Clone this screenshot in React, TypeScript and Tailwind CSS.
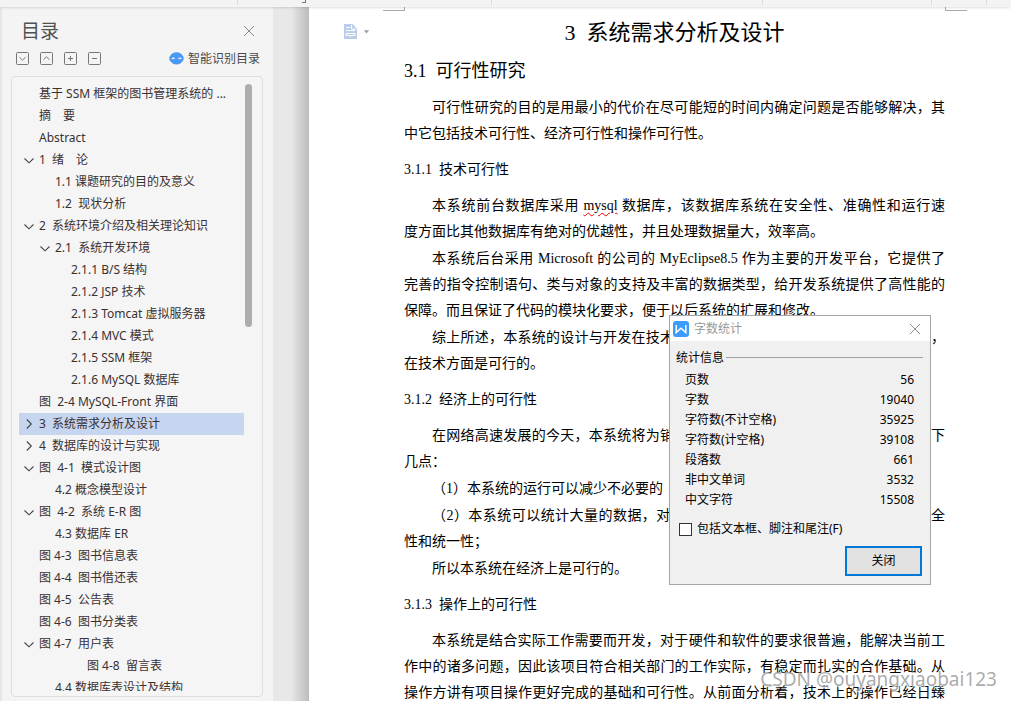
import { Fragment, type ReactNode } from 'react';

type Entry = { text: string; level: number; mark?: 'open' | 'closed'; current?: boolean };

const entries: Entry[] = [
  { text: '基于 SSM 框架的图书管理系统的 ...', level: 0 },
  { text: '摘　要', level: 0 },
  { text: 'Abstract', level: 0 },
  { text: '1  绪　论', level: 0, mark: 'open' },
  { text: '1.1 课题研究的目的及意义', level: 1 },
  { text: '1.2  现状分析', level: 1 },
  { text: '2  系统环境介绍及相关理论知识', level: 0, mark: 'open' },
  { text: '2.1  系统开发环境', level: 1, mark: 'open' },
  { text: '2.1.1 B/S 结构', level: 2 },
  { text: '2.1.2 JSP 技术', level: 2 },
  { text: '2.1.3 Tomcat 虚拟服务器', level: 2 },
  { text: '2.1.4 MVC 模式', level: 2 },
  { text: '2.1.5 SSM 框架', level: 2 },
  { text: '2.1.6 MySQL 数据库', level: 2 },
  { text: '图  2-4 MySQL-Front 界面', level: 0 },
  { text: '3  系统需求分析及设计', level: 0, mark: 'closed', current: true },
  { text: '4  数据库的设计与实现', level: 0, mark: 'closed' },
  { text: '图  4-1  模式设计图', level: 0, mark: 'open' },
  { text: '4.2 概念模型设计', level: 1 },
  { text: '图  4-2  系统 E-R 图', level: 0, mark: 'open' },
  { text: '4.3 数据库 ER', level: 1 },
  { text: '图 4-3  图书信息表', level: 0 },
  { text: '图 4-4  图书借还表', level: 0 },
  { text: '图 4-5  公告表', level: 0 },
  { text: '图 4-6  图书分类表', level: 0 },
  { text: '图 4-7  用户表', level: 0, mark: 'open' },
  { text: '图 4-8  留言表', level: 3 },
  { text: '4.4 数据库表设计及结构', level: 1 },
];

const indents = ['pl-1', 'pl-5', 'pl-9', 'pl-13'];

const stats: [string, string][] = [
  ['页数', '56'],
  ['字数', '19040'],
  ['字符数(不计空格)', '35925'],
  ['字符数(计空格)', '39108'],
  ['段落数', '661'],
  ['非中文单词', '3532'],
  ['中文字符', '15508'],
];

function Mark({ mark }: { mark?: 'open' | 'closed' }) {
  return (
    <svg className="w-3 h-3 shrink-0 mr-1" viewBox="0 0 12 12" fill="none" stroke="#444" strokeWidth="1.1">
      {mark === 'open' && <path d="M1.5 4.5 6 8.8l4.5-4.3" />}
      {mark === 'closed' && <path d="M3.8 1.5 8.3 6l-4.5 4.5" />}
    </svg>
  );
}

function BoxButton({ label, d }: { label: string; d: string }) {
  return (
    <button type="button" aria-label={label} className="w-[13px] h-[13px]">
      <svg viewBox="0 0 13 13" className="w-[13px] h-[13px]" fill="none" stroke="#777">
        <rect x=".5" y=".5" width="12" height="12" rx="1" />
        <path d={d} />
      </svg>
    </button>
  );
}

function Sidebar() {
  return (
    <aside className="w-[273px] shrink-0 flex flex-col border-l-2 border-[#e6e6e6] bg-[#f4f4f4] pl-[9px] pr-[10px] pb-1 text-xs">
      <div className="flex items-center justify-between pl-2.5 pr-2 pt-2.5">
        <h2 className="text-[19px] leading-7 text-[#505050]">目录</h2>
        <button type="button" aria-label="关闭目录" className="w-3 h-3">
          <svg viewBox="0 0 12 12" className="w-3 h-3" stroke="#8a8a8a" strokeWidth="1">
            <path d="M1 1l10 10M11 1 1 11" />
          </svg>
        </button>
      </div>
      <div className="flex items-center justify-between pl-[5px] pr-[3px] h-[26px]">
        <div className="flex gap-[11px]">
          <BoxButton label="展开" d="M3.5 5.3l3 2.9 3-2.9" />
          <BoxButton label="收起" d="M3.5 7.7l3-2.9 3 2.9" />
          <BoxButton label="增加级别" d="M6.5 4v5M4 6.5h5" />
          <BoxButton label="减少级别" d="M4 6.5h5" />
        </div>
        <button type="button" className="flex items-center gap-1 pt-px text-[#4a4a4a]">
          <svg viewBox="0 0 15 13" className="w-[15px] h-[13px]">
            <path
              d="M7.5.3c3 0 5.2 1.300 6 3.200.7.600 1.200 1.600 1.200 2.900 0 1.500-.6 2.600-1.500 3.200-1.100 1.800-3.100 3-5.700 3s-4.600-1.200-5.700-3C.9 9 .3 7.900.3 6.400c0-1.300.5-2.300 1.200-2.900.8-1.900 3-3.200 6-3.200z"
              fill="#4a9af5"
            />
            <path d="M2.900 7c.5-1.400 2-1.400 2.500 0M9.600 7c.6-1.400 2-1.400 2.500 0" fill="none" stroke="#fff" strokeWidth="1.100" />
          </svg>
          智能识别目录
        </button>
      </div>
      <div className="mt-[5px] flex-1 min-h-0 flex rounded border border-[#dedede] bg-[#f5f5f5] pt-1.5 pb-[5px] pl-[7px] pr-[9px]">
        <nav className="flex-1 overflow-hidden">
          {entries.map((e) => (
            <a
              key={e.text}
              href="#chapter"
              className={`flex items-center h-[22px] whitespace-pre text-[#3a3131] ${indents[e.level]} ${e.current ? 'bg-[#c7d6f0]' : ''}`}
            >
              <Mark mark={e.mark} />
              {e.text}
            </a>
          ))}
        </nav>
        <div className="w-[9px] pl-px pt-px">
          <div className="w-[7px] h-[243px] rounded bg-[#adadaf]" />
        </div>
      </div>
    </aside>
  );
}

function Full({ indent, children }: { indent?: boolean; children: ReactNode }) {
  return (
    <span className={`block whitespace-nowrap text-justify [text-align-last:justify] ${indent ? 'pl-7' : ''}`}>{children}</span>
  );
}

function Last({ indent, children }: { indent?: boolean; children: ReactNode }) {
  return <span className={`block whitespace-nowrap ${indent ? 'pl-7' : ''}`}>{children}</span>;
}

function Sub({ children }: { children: ReactNode }) {
  return <h3 className="text-sm leading-[46px] whitespace-pre">{children}</h3>;
}

function Paper() {
  return (
    <article className="flex-1 min-w-0 pt-2.5 text-sm leading-[26px] text-black font-['Liberation_Serif','Noto_Sans_CJK_SC',serif]">
      <h1 className="text-center text-[22px] leading-8 whitespace-pre">3  系统需求分析及设计</h1>
      <h2 className="mb-px text-lg leading-[45px] whitespace-pre">3.1  可行性研究</h2>
      <p>
        <Full indent>可行性研究的目的是用最小的代价在尽可能短的时间内确定问题是否能够解决，其</Full>
        <Last>中它包括技术可行性、经济可行性和操作可行性。</Last>
      </p>
      <Sub>3.1.1  技术可行性</Sub>
      <div className="flex flex-col gap-px">
        <p>
          <Full indent>
            本系统前台数据库采用 <span className="underline decoration-wavy decoration-[#f00] decoration-1 underline-offset-2">mysql</span> 数据库，该数据库系统在安全性、准确性和运行速
          </Full>
          <Last>度方面比其他数据库有绝对的优越性，并且处理数据量大，效率高。</Last>
        </p>
        <p>
          <Full indent>本系统后台采用 Microsoft 的公司的 MyEclipse8.5 作为主要的开发平台，它提供了</Full>
          <Full>完善的指令控制语句、类与对象的支持及丰富的数据类型，给开发系统提供了高性能的</Full>
          <Last>保障。而且保证了代码的模块化要求，便于以后系统的扩展和修改。</Last>
        </p>
        <p>
          <Full indent>综上所述，本系统的设计与开发在技术方面已有成熟方案，并将逐步走向规范化，</Full>
          <Last>在技术方面是可行的。</Last>
        </p>
      </div>
      <Sub>3.1.2  经济上的可行性</Sub>
      <div className="flex flex-col gap-px">
        <p>
          <Full indent>在网络高速发展的今天，本系统将为销售与管理工作带来的便利，主要体现在以下</Full>
          <Last>几点：</Last>
        </p>
        <p>
          <Last indent>（1）本系统的运行可以减少不必要的</Last>
        </p>
        <p>
          <Full indent>（2）本系统可以统计大量的数据，对图书借还信息进行汇总，保证数据完整安全</Full>
          <Last>性和统一性；</Last>
        </p>
        <p>
          <Last indent>所以本系统在经济上是可行的。</Last>
        </p>
      </div>
      <Sub>3.1.3  操作上的可行性</Sub>
      <p>
        <Full indent>本系统是结合实际工作需要而开发，对于硬件和软件的要求很普遍，能解决当前工</Full>
        <Full>作中的诸多问题，因此该项目符合相关部门的工作实际，有稳定而扎实的合作基础。从</Full>
        <Full>操作方讲有项目操作更好完成的基础和可行性。从前面分析着，技术上的操作已经日臻</Full>
      </p>
    </article>
  );
}

function WordCount() {
  return (
    <section
      role="dialog"
      aria-label="字数统计"
      className="absolute left-[360px] top-[308px] w-[262px] h-[270px] flex flex-col border border-[#a6a6a6] bg-[#f0f0f0] text-xs text-black"
    >
      <header className="flex items-center h-[25px] pl-[3px] pr-[9px] bg-white text-[#999]">
        <svg viewBox="0 0 16 16" className="w-4 h-4 mr-[5px]">
          <rect width="16" height="16" rx="3" fill="#3b9cfb" />
          <path d="M3.200 4v7.500L8 7.300l4.800 4.200V4" fill="none" stroke="#fff" strokeWidth="1.500" />
        </svg>
        <h2 className="flex-1">字数统计</h2>
        <button type="button" aria-label="关闭窗口" className="w-3 h-3">
          <svg viewBox="0 0 12 12" className="w-3 h-3" stroke="#8a8a8a">
            <path d="M1 1l10 10M11 1 1 11" />
          </svg>
        </button>
      </header>
      <div className="flex-1 flex flex-col pl-1.5 pr-[7px] pb-2">
        <div className="flex items-center gap-0.5 pt-1 h-[29px]">
          <h3>统计信息</h3>
          <span className="flex-1 h-px bg-[#a0a0a0]" />
        </div>
        <table className="ml-[9px] mr-[9px]">
          <tbody>
            {stats.map(([name, value]) => (
              <tr key={name} className="h-5">
                <th scope="row" className="p-0 text-left font-normal">{name}</th>
                <td className="p-0 text-right">{value}</td>
              </tr>
            ))}
          </tbody>
        </table>
        <label className="flex items-center gap-[5px] pl-[3px] mt-[9px] h-5">
          <input type="checkbox" className="appearance-none w-[13px] h-[13px] border border-[#333] bg-white" />
          包括文本框、脚注和尾注(F)
        </label>
        <button type="button" className="mt-auto self-end w-[77px] h-[30px] mr-px border-2 border-[#0078d7] bg-[#e1e1e1]">
          关闭
        </button>
      </div>
    </section>
  );
}

export default function App() {
  const gaps = ['w-[237px]', 'w-[253px]', 'w-[270px]', 'w-[168px]', 'w-[54px]'];
  return (
    <div className="h-screen overflow-hidden flex flex-col bg-white font-['Noto_Sans','Noto_Sans_CJK_SC',sans-serif]">
      <div className="relative z-10 flex h-[7px] shrink-0 bg-[#f3f3f3] shadow-sm pb-0.5">
        {gaps.map((w) => (
          <Fragment key={w}>
            <span className={w} />
            <span className="w-px bg-[#dcdcdc]" />
          </Fragment>
        ))}
        <span className="absolute left-[302px] top-0 w-1 h-[3px] border-r border-b border-[#777]" />
      </div>
      <main className="flex-1 min-h-0 flex">
        <Sidebar />
        <div className="w-9 shrink-0 bg-linear-to-r from-[#e8e8e8] from-50% to-[#bcbcbc]" />
        <div className="relative flex-1 min-w-0 flex pl-[34px] pr-[66px] overflow-hidden">
          <span className="absolute left-[74px] top-0 w-[22px] h-1 border-r border-b border-[#aaa]" />
          <span className="absolute right-11 top-0 w-[22px] h-1 border-l border-b border-[#aaa]" />
          <div className="w-[61px] shrink-0 pt-[17px]">
            <button type="button" aria-label="文档选项" className="flex items-center gap-1.5 pl-px">
              <svg viewBox="0 0 13 15" className="w-[13px] h-[15px]">
                <path d="M0 0h8.500L13 4.500V15H0z" fill="#b9cdeb" />
                <path d="M2 3.500h4M2 6.500h9M2 9.500h9v2H2zM7.500 1v4H12M6.500 11.500v1.500" fill="none" stroke="#fff" />
              </svg>
              <svg viewBox="0 0 7 4" className="w-[7px] h-1">
                <path d="M.8.300h5.400L3.500 3.500z" fill="#a0a0a0" />
              </svg>
            </button>
          </div>
          <Paper />
          <WordCount />
          <span className="absolute right-3.5 bottom-1.5 text-[19px] leading-8 text-[#8f8f8f]/75 [text-shadow:1px_1px_1px_white]">
            CSDN @ouyangxiaobai123
          </span>
        </div>
      </main>
    </div>
  );
}
